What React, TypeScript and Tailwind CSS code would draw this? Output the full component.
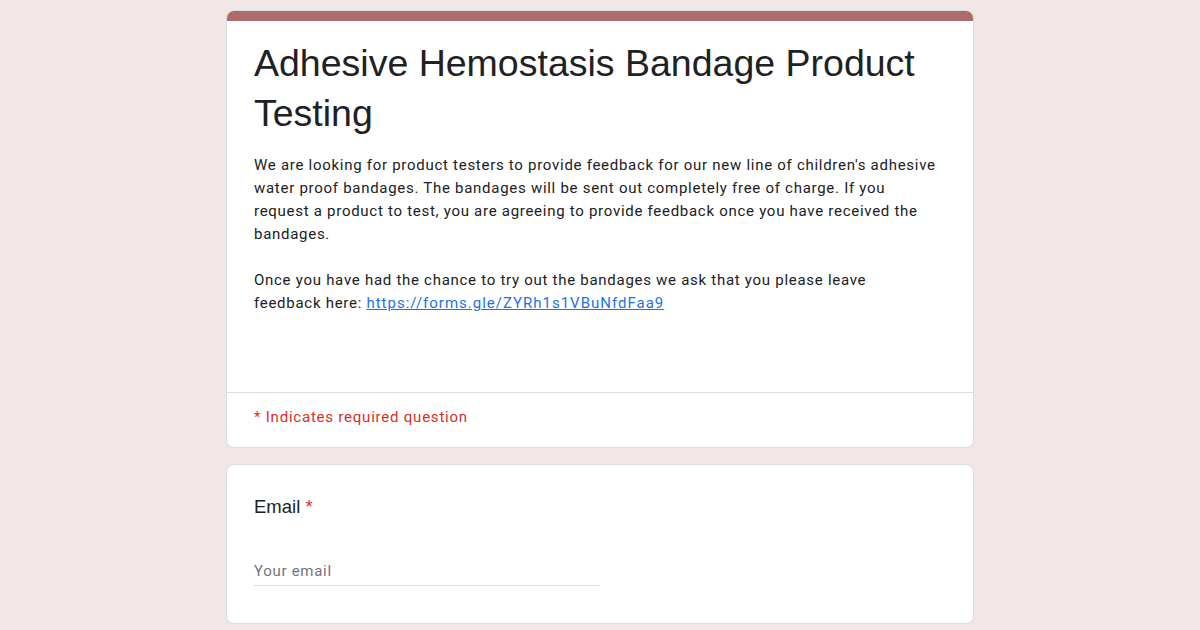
import React from "react";

export default function App() {
  return (
    <div className="w-[1200px] h-[630px] overflow-hidden bg-[#f0e7e6] flex flex-col items-center pt-[10px] gap-[16px]">
      <div className="w-[748px] flex flex-col rounded-[8px] bg-white border border-[#dadce0] overflow-hidden">
        <div className="h-[11px] bg-[#ae6c6c] -mx-px -mt-px" />
        <div className="px-[27px] pt-[17px] pb-[24px] h-[371px] flex flex-col">
          <h1 className="text-[37.5px] leading-[50px] text-[#202124] font-['Liberation_Sans',Arial,sans-serif]">
            Adhesive Hemostasis Bandage Product Testing
          </h1>
          <div className="mt-[16px] text-[15px] leading-[23px] tracking-[0.72px] text-[#202124] font-['Roboto',sans-serif] whitespace-nowrap">
            <p>
              We are looking for product testers to provide feedback for our new line of children's adhesive
              <br />
              water proof bandages. The bandages will be sent out completely free of charge. If you
              <br />
              request a product to test, you are agreeing to provide feedback once you have received the
              <br />
              bandages.
            </p>
            <p className="h-[23px]" />
            <p>
              Once you have had the chance to try out the bandages we ask that you please leave
              <br />
              feedback here:{" "}
              <a href="#" className="text-[#1a73e8] underline tracking-[1px]">https://forms.gle/ZYRh1s1VBuNfdFaa9</a>
            </p>
          </div>
        </div>
        <div className="border-t border-[#dadce0] px-[27px] pt-[11px] h-[55px]">
          <span className="text-[15px] leading-[20px] tracking-[0.78px] text-[#d93025] font-['Roboto',sans-serif]">
            * Indicates required question
          </span>
        </div>
      </div>
      <div className="w-[748px] h-[160px] rounded-[8px] bg-white border border-[#dadce0] px-[27px] pt-[30px] flex flex-col">
        <div className="text-[18.5px] leading-[24px] text-[#202124] font-['Liberation_Sans',Arial,sans-serif]">
          Email <span className="text-[#d93025]">*</span>
        </div>
        <div className="mt-[42px] w-[346px] border-b border-[#dadce0] pb-[4px] text-[15px] leading-[20px] tracking-[0.7px] text-[#70757a] font-['Roboto',sans-serif]">
          Your email
        </div>
      </div>
    </div>
  );
}
